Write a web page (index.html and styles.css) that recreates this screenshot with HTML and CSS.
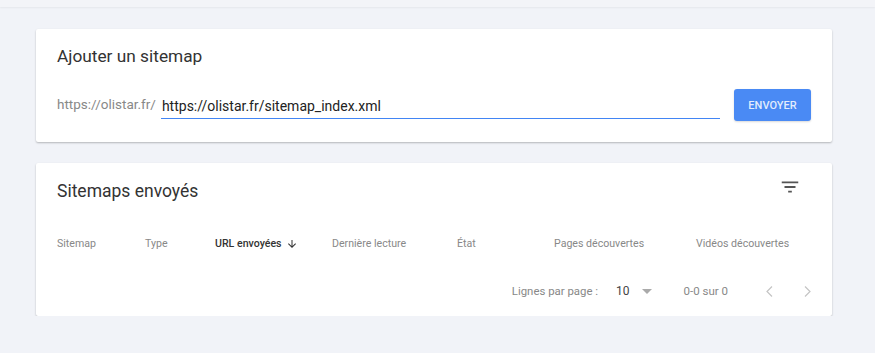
FILE: index.html
```html
<!DOCTYPE html>
<html lang="fr">
<head>
  <meta charset="UTF-8" />
  <title>Sitemaps</title>
  <link rel="stylesheet" href="styles.css">
</head>
<body>
  <!-- Bandeau supérieur -->
  <div class="topbar"></div>

  <div class="page">
    <!-- Carte : ajout d'un sitemap -->
    <div class="card add-card">
      <h2 class="card-title">Ajouter un sitemap</h2>
      <div class="add-row">
        <span class="prefix">https://olistar.fr/</span>
        <div class="url-field">https://olistar.fr/sitemap_index.xml</div>
        <button class="btn">ENVOYER</button>
      </div>
    </div>

    <!-- Carte : sitemaps envoyés -->
    <div class="card list-card">
      <div class="list-head">
        <h2 class="card-title">Sitemaps envoyés</h2>
        <svg class="filter-icon" width="22" height="22" viewBox="0 0 24 24">
          <path d="M10 18h4v-2h-4v2zM3 6v2h18V6H3zm3 7h12v-2H6v2z" fill="#555"/>
        </svg>
      </div>

      <div class="table-head">
        <span>Sitemap</span>
        <span>Type</span>
        <span class="sorted">URL envoyées
          <svg width="12" height="12" viewBox="0 0 24 24"><path d="M20 12l-1.41-1.41L13 16.17V4h-2v12.17l-5.58-5.59L4 12l8 8 8-8z" fill="#333"/></svg>
        </span>
        <span>Dernière lecture</span>
        <span>État</span>
        <span>Pages découvertes</span>
        <span>Vidéos découvertes</span>
      </div>

      <div class="pager">
        <span class="pager-label">Lignes par page :</span>
        <span class="pager-count">10</span>
        <span class="pager-caret"></span>
        <span class="pager-range">0-0 sur 0</span>
        <svg class="pager-nav" width="7" height="11" viewBox="0 0 7 11"><polyline points="6,0.5 1,5.5 6,10.5" fill="none" stroke="#c4c4c4" stroke-width="1.2"/></svg>
        <svg class="pager-nav" width="7" height="11" viewBox="0 0 7 11"><polyline points="1,0.5 6,5.5 1,10.5" fill="none" stroke="#c4c4c4" stroke-width="1.2"/></svg>
      </div>
    </div>
  </div>
</body>
</html>
```

FILE: styles.css
```css
/* Fond général de la page */
body {
  margin: 0;
  font-family: Roboto, "Liberation Sans", Arial, sans-serif;
  background: #f1f3f8;
  color: #333;
}

/* Bandeau fin en haut */
.topbar {
  height: 7px;
  background: #f3f4f8;
  box-shadow: 0 1px 2px rgba(0,0,0,0.05);
}

.page {
  padding: 22px 43px 0 36px;
}

/* Carte blanche */
.card {
  background: white;
  border-radius: 2px;
  box-shadow: 0 1px 2px rgba(0,0,0,0.25);
}

.card-title {
  margin: 0;
  font-size: 17.3px;
  font-weight: 400;
  color: #333;
}

/* Première carte */
.add-card {
  height: 113px;
  box-sizing: border-box;
  padding: 17px 21px 0 21px;
}

.add-row {
  display: flex;
  align-items: center;
  margin-top: 23px;
}

.prefix {
  font-size: 13.5px;
  color: #888;
  margin-top: -2px;
}

.url-field {
  flex: 1;
  margin-left: 5px;
  font-size: 14px;
  color: #222;
  padding: 3px 1px 4px 1px;
  border-bottom: 1px solid #4285f4;
  margin-top: 3px;
}

.btn {
  margin-left: 14px;
  width: 77px;
  height: 32px;
  background: #4a8af4;
  color: rgba(255,255,255,0.85);
  border: none;
  border-radius: 3px;
  font-family: Roboto, "Liberation Sans", Arial, sans-serif;
  font-size: 11px;
  font-weight: 500;
  box-shadow: 0 1px 2px rgba(0,0,0,0.15);
}

/* Deuxième carte */
.list-card {
  margin-top: 21px;
  height: 153px;
  box-sizing: border-box;
  padding: 17px 21px 0 21px;
}

.list-head {
  display: flex;
  align-items: center;
  justify-content: space-between;
  padding-right: 10px;
  margin-top: 1px;
}

.list-head .card-title {
  font-size: 17.5px;
}

.filter-icon {
  margin-top: -8px;
}

.table-head {
  display: grid;
  grid-template-columns: 88px 70px 117px 125px 97px 142px 1fr;
  margin-top: 36px;
  font-size: 10.6px;
  color: #888;
}

.table-head .sorted {
  color: #333;
  font-weight: 500;
  display: flex;
  align-items: center;
  gap: 4px;
}

/* Pagination */
.pager {
  display: flex;
  align-items: center;
  justify-content: flex-end;
  margin-top: 34px;
  padding-right: 0;
  font-size: 11.5px;
  color: #888;
}

.pager-label {
  font-size: 11.4px;
}

.pager-count {
  margin-left: 18px;
  font-size: 12px;
  color: #444;
}

.pager-caret {
  margin-left: 12px;
  width: 0;
  height: 0;
  border-left: 5px solid transparent;
  border-right: 5px solid transparent;
  border-top: 5px solid #aaa;
}

.pager-range {
  margin-left: 32px;
}

.pager-nav {
  margin-left: 31px;
}

.pager-range + .pager-nav {
  margin-left: 38px;
}
```
